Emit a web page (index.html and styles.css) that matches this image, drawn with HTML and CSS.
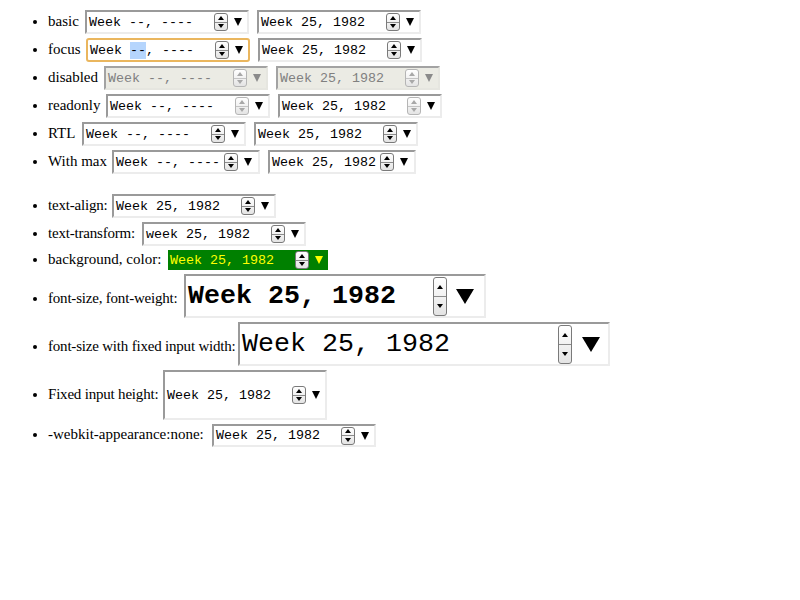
FILE: index.html
```html
<!DOCTYPE html>
<html>
<head>
<meta charset="utf-8">
<link rel="stylesheet" href="styles.css">
</head>
<body>
<ul class="list first">
  <li><span class="lbl l-basic">basic</span><span class="f"><span class="t">Week --, ----</span><span class="spin"><i class="up"></i><i class="dn"></i></span><span class="arr"></span></span><span class="f"><span class="t">Week 25, 1982</span><span class="spin"><i class="up"></i><i class="dn"></i></span><span class="arr"></span></span></li>
  <li><span class="lbl l-focus">focus</span><span class="f focus"><span class="t">Week <span class="sel">--</span>, ----</span><span class="spin"><i class="up"></i><i class="dn"></i></span><span class="arr"></span></span><span class="f"><span class="t">Week 25, 1982</span><span class="spin"><i class="up"></i><i class="dn"></i></span><span class="arr"></span></span></li>
  <li><span class="lbl l-disabled">disabled</span><span class="f dis"><span class="t">Week --, ----</span><span class="spin off"><i class="up"></i><i class="dn"></i></span><span class="arr"></span></span><span class="f dis"><span class="t">Week 25, 1982</span><span class="spin off"><i class="up"></i><i class="dn"></i></span><span class="arr"></span></span></li>
  <li><span class="lbl l-readonly">readonly</span><span class="f"><span class="t">Week --, ----</span><span class="spin off"><i class="up"></i><i class="dn"></i></span><span class="arr"></span></span><span class="f"><span class="t">Week 25, 1982</span><span class="spin off"><i class="up"></i><i class="dn"></i></span><span class="arr"></span></span></li>
  <li><span class="lbl l-rtl">RTL</span><span class="f"><span class="t">Week --, ----</span><span class="spin"><i class="up"></i><i class="dn"></i></span><span class="arr"></span></span><span class="f"><span class="t">Week 25, 1982</span><span class="spin"><i class="up"></i><i class="dn"></i></span><span class="arr"></span></span></li>
  <li><span class="lbl l-max">With max</span><span class="f narrow"><span class="t">Week --, ----</span><span class="spin"><i class="up"></i><i class="dn"></i></span><span class="arr"></span></span><span class="f narrow"><span class="t">Week 25, 1982</span><span class="spin"><i class="up"></i><i class="dn"></i></span><span class="arr"></span></span></li>
</ul>
<ul class="list">
  <li><span class="lbl tight l-align">text-align:</span><span class="f"><span class="t">Week 25, 1982</span><span class="spin"><i class="up"></i><i class="dn"></i></span><span class="arr"></span></span></li>
  <li><span class="lbl tight l-transform">text-transform:</span><span class="f lower"><span class="t">Week 25, 1982</span><span class="spin"><i class="up"></i><i class="dn"></i></span><span class="arr"></span></span></li>
  <li><span class="lbl l-bg">background, color:</span><span class="f bg"><span class="t">Week 25, 1982</span><span class="spin"><i class="up"></i><i class="dn"></i></span><span class="arr"></span></span></li>
  <li><span class="lbl tight l-big">font-size, font-weight:</span><span class="f big"><span class="t">Week 25, 1982</span><span class="spin"><i class="up"></i><i class="dn"></i></span><span class="arr"></span></span></li>
  <li><span class="lbl tight l-wide">font-size with fixed input width:</span><span class="f wide"><span class="t">Week 25, 1982</span><span class="spin"><i class="up"></i><i class="dn"></i></span><span class="arr"></span></span></li>
  <li><span class="lbl tight l-tall">Fixed input height:</span><span class="f tall"><span class="t">Week 25, 1982</span><span class="spin"><i class="up"></i><i class="dn"></i></span><span class="arr"></span></span></li>
  <li><span class="lbl l-plain">-webkit-appearance:none:</span><span class="f plain"><span class="t">Week 25, 1982</span><span class="spin"><i class="up"></i><i class="dn"></i></span><span class="arr"></span></span></li>
</ul>
</body>
</html>
```
FILE: styles.css
```css
body {
  margin: 8px;
  font-family: "Liberation Serif", "Times New Roman", serif;
  font-size: 15px;
  color: #000;
  background: #fff;
}

.list {
  margin: 0;
  padding-left: 40px;
}

.first {
  margin-bottom: 16px;
}

.list li {
  line-height: 16px;
}

.lbl {
  display: inline-block;
  white-space: nowrap;
}

.tight {
  letter-spacing: -0.2px;
}

.l-basic { width: 35px; }
.l-focus { width: 36px; }
.l-disabled { width: 54px; }
.l-readonly { width: 56px; }
.l-rtl { width: 32px; }
.l-max { width: 62px; }
.l-align { width: 62px; }
.l-transform { width: 92px; }
.l-bg { width: 118px; }
.l-big { width: 134px; }
.l-wide { width: 188px; }
.l-tall { width: 113px; }
.l-plain { width: 162px; }

/* week field */
.f {
  display: inline-flex;
  align-items: center;
  box-sizing: border-box;
  width: 164px;
  height: 24px;
  margin: 2px;
  padding: 0 4px 0 2px;
  border: 2px solid;
  border-color: #9a9a9a #ececec #ececec #9a9a9a;
  background: #fff;
  color: #000;
  font-family: "Liberation Mono", "Courier New", monospace;
  font-size: 13.333px;
  letter-spacing: 0;
  vertical-align: baseline;
}

.f + .f {
  margin-left: 6px;
}

.t {
  flex: none;
  width: 125px;
  line-height: 15px;
  white-space: pre;
  overflow: visible;
}

.sel {
  background: #b5d5fd;
  padding: 1px 0;
}

.spin {
  flex: none;
  display: flex;
  flex-direction: column;
  box-sizing: border-box;
  width: 14px;
  height: 18px;
  border: 1px solid #7a7a7a;
  border-radius: 3px;
  background: linear-gradient(#ffffff, #e4e4e4);
}

.spin i {
  flex: 1;
  display: flex;
  align-items: center;
  justify-content: center;
}

.spin .up {
  border-bottom: 1px solid #8c8c8c;
}

.spin i::before {
  content: "";
  border-left: 3px solid transparent;
  border-right: 3px solid transparent;
}

.spin .up::before {
  border-bottom: 4px solid #000;
}

.spin .dn::before {
  border-top: 4px solid #000;
}

.spin.off {
  border-color: #b5b5b5;
}

.spin.off .up {
  border-bottom-color: #c4c4c4;
}

.spin.off .up::before {
  border-bottom-color: #a8a8a8;
}

.spin.off .dn::before {
  border-top-color: #a8a8a8;
}

.arr {
  flex: none;
  width: 0;
  height: 0;
  margin-left: 6px;
  border-left: 4.5px solid transparent;
  border-right: 4.5px solid transparent;
  border-top: 8px solid #000;
}

/* focus */
.focus {
  border-color: #eab65e;
  border-radius: 3px;
}

/* disabled */
.dis {
  background: #ebebe4;
  color: #808080;
  border-color: #a3a3a3 #e6e6e0 #e6e6e0 #a3a3a3;
}

.dis .arr {
  border-top-color: #8a8a8a;
}

/* with max */
.narrow {
  width: 148px;
}

.narrow .t {
  width: 108px;
}

/* text-transform */
.lower .t {
  text-transform: lowercase;
}

/* background, color */
.bg {
  width: 160px;
  height: 20px;
  border: 0;
  background: #008000;
  color: #ffff00;
}

.bg .arr {
  border-top-color: #ffff00;
}

/* font-size, font-weight */
.big,
.wide {
  height: 44px;
  font-size: 26.667px;
}

.big {
  width: 302px;
  font-weight: bold;
  padding-right: 10px;
}

.big .t,
.wide .t {
  line-height: 30px;
}

.big .t {
  width: 245px;
}

.big .spin,
.wide .spin {
  height: 39px;
}

.big .arr,
.wide .arr {
  margin-left: 9px;
  border-left-width: 9px;
  border-right-width: 9px;
  border-top-width: 15px;
}

/* fixed width */
.wide {
  width: 372px;
  padding-right: 8px;
}

.wide .t {
  flex: 1;
}

.wide .arr {
  margin-left: 10px;
}

/* fixed height */
.tall {
  height: 50px;
}

/* appearance none */
.plain {
  height: 23px;
}
```
